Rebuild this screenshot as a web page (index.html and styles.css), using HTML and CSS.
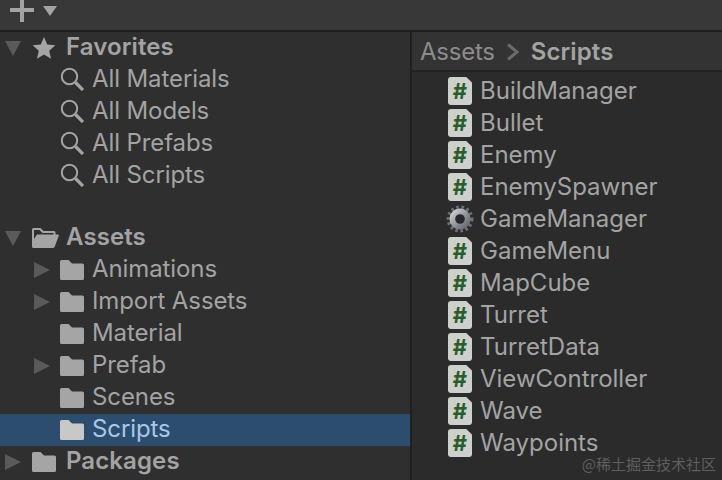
FILE: index.html
```html
<!DOCTYPE html>
<html lang="en">
<head>
<meta charset="utf-8">
<title>Project</title>
<link rel="stylesheet" href="styles.css">
</head>
<body>
<svg class="defs" width="0" height="0" aria-hidden="true">
  <symbol id="folder" viewBox="0 0 24 20"><path d="M1.5 0H8.5L12 3.5H22.5A1.5 1.5 0 0 1 24 5V18.5A1.5 1.5 0 0 1 22.5 20H1.5A1.5 1.5 0 0 1 0 18.5V1.5A1.5 1.5 0 0 1 1.5 0Z" fill="currentColor"/></symbol>
  <symbol id="lens" viewBox="0 0 24 24"><circle cx="9.5" cy="9.5" r="7.7" fill="none" stroke="currentColor" stroke-width="2"/><path d="M15.5 15.5L23 23" fill="none" stroke="currentColor" stroke-width="3.2"/></symbol>
  <symbol id="tri-down" viewBox="0 0 16 16"><path d="M0 1H16L8 16Z" fill="currentColor"/></symbol>
  <symbol id="tri-right" viewBox="0 0 16 16"><path d="M0 0L16 8L0 16Z" fill="currentColor"/></symbol>
</svg>
<div class="toolbar">
  <svg class="plus" width="24" height="24" viewBox="0 0 24 24"><path d="M10 0H14V10H24V14H14V24H10V14H0V10H10Z" fill="currentColor"/></svg>
  <svg class="caret" width="14" height="10" viewBox="0 0 14 10"><path d="M0 0H14L7 10Z" fill="currentColor"/></svg>
</div>
<div class="panes">
  <aside class="tree">
    <div class="row depth0">
      <svg class="tw"><use href="#tri-down"/></svg>
      <svg class="ico" width="24" height="24" viewBox="0 0 24 24"><path d="M12 1L15.2 8.6L23.4 9.3L17.2 14.7L19 22.8L12 18.5L5 22.8L6.8 14.7L.6 9.3L8.8 8.6Z" fill="currentColor"/></svg>
      <span class="head">Favorites</span>
    </div>
    <div class="row depth1"><svg class="ico lens"><use href="#lens"/></svg><span>All Materials</span></div>
    <div class="row depth1"><svg class="ico lens"><use href="#lens"/></svg><span>All Models</span></div>
    <div class="row depth1"><svg class="ico lens"><use href="#lens"/></svg><span>All Prefabs</span></div>
    <div class="row depth1"><svg class="ico lens"><use href="#lens"/></svg><span>All Scripts</span></div>
    <div class="spacer"></div>
    <div class="row depth0">
      <svg class="tw"><use href="#tri-down"/></svg>
      <svg class="ico open" width="27" height="20" viewBox="0 0 27 20"><path d="M1.5 0H8.5L11.5 3H22A1.5 1.5 0 0 1 23.5 4.5V6.5H21.5V5H10.5L7.5 2H2V11L5 6.5H25.5C26.5 6.5 27 7.2 26.6 8.2L22.8 18.6C22.5 19.5 22 20 21 20H1.5A1.5 1.5 0 0 1 0 18.5V1.5A1.5 1.5 0 0 1 1.5 0Z" fill="currentColor"/></svg>
      <span class="head">Assets</span>
    </div>
    <div class="row depth1"><svg class="tw"><use href="#tri-right"/></svg><svg class="ico folder"><use href="#folder"/></svg><span>Animations</span></div>
    <div class="row depth1"><svg class="tw"><use href="#tri-right"/></svg><svg class="ico folder"><use href="#folder"/></svg><span>Import Assets</span></div>
    <div class="row depth1"><svg class="ico folder"><use href="#folder"/></svg><span>Material</span></div>
    <div class="row depth1"><svg class="tw"><use href="#tri-right"/></svg><svg class="ico folder"><use href="#folder"/></svg><span>Prefab</span></div>
    <div class="row depth1"><svg class="ico folder"><use href="#folder"/></svg><span>Scenes</span></div>
    <div class="row depth1 selected"><svg class="ico folder"><use href="#folder"/></svg><span>Scripts</span></div>
    <div class="row depth0">
      <svg class="tw"><use href="#tri-right"/></svg>
      <svg class="ico folder"><use href="#folder"/></svg>
      <span class="head">Packages</span>
    </div>
  </aside>
  <main class="files">
    <div class="crumbs">
      <span class="crumb">Assets</span>
      <svg width="14" height="18" viewBox="0 0 14 18"><path d="M2 1.5L11 9L2 16.5" fill="none" stroke="currentColor" stroke-width="3"/></svg>
      <span class="head">Scripts</span>
    </div>
    <div class="list">
      <div class="file"><span class="script">#</span><span>BuildManager</span></div>
      <div class="file"><span class="script">#</span><span>Bullet</span></div>
      <div class="file"><span class="script">#</span><span>Enemy</span></div>
      <div class="file"><span class="script">#</span><span>EnemySpawner</span></div>
      <div class="file">
        <svg class="gear" width="28" height="28" viewBox="0 0 28 28">
          <defs><linearGradient id="steel" x1="0" y1="0" x2="1" y2="1"><stop offset="0" stop-color="#dfe1e4"/><stop offset=".55" stop-color="#8d9096"/><stop offset="1" stop-color="#55585d"/></linearGradient></defs>
          <circle cx="14" cy="14" r="11" fill="none" stroke="#6e7075" stroke-width="5" stroke-dasharray="2.4 2.4"/>
          <circle cx="14" cy="14" r="10.5" fill="url(#steel)"/>
          <circle cx="14" cy="14" r="4.8" fill="#26282b"/>
        </svg>
        <span>GameManager</span>
      </div>
      <div class="file"><span class="script">#</span><span>GameMenu</span></div>
      <div class="file"><span class="script">#</span><span>MapCube</span></div>
      <div class="file"><span class="script">#</span><span>Turret</span></div>
      <div class="file"><span class="script">#</span><span>TurretData</span></div>
      <div class="file"><span class="script">#</span><span>ViewController</span></div>
      <div class="file"><span class="script">#</span><span>Wave</span></div>
      <div class="file"><span class="script">#</span><span>Waypoints</span></div>
    </div>
  </main>
</div>
<div class="watermark">@稀土掘金技术社区</div>
</body>
</html>
```

FILE: styles.css
```css
* { box-sizing: border-box; }
html, body { margin: 0; padding: 0; }
body {
  width: 722px;
  height: 480px;
  overflow: hidden;
  position: relative;
  background: #2b2b2b;
  color: #a3a3a3;
  font-family: Inter, "Liberation Sans", sans-serif;
  font-size: 24px;
  line-height: 32px;
}
.defs { position: absolute; }
.toolbar {
  height: 32px;
  display: flex;
  align-items: flex-start;
  background: #383838;
  border-bottom: 2px solid #1f1f1f;
  padding: 0 0 0 10px;
  color: #a3a3a3;
  overflow: hidden;
}
.plus { margin-top: -2px; }
.caret { margin: 6px 0 0 9px; }
.panes { display: flex; height: 448px; }
.tree {
  width: 412px;
  flex: none;
  background: #2f2f2f;
  border-right: 2px solid #1f1f1f;
  overflow: hidden;
}
.row {
  height: 32px;
  position: relative;
  display: flex;
  align-items: center;
  letter-spacing: -0.1px;
}
.row > span { padding-bottom: 2px; }
.depth0 { padding-left: 32px; }
.depth1 { padding-left: 60px; }
.spacer { height: 30px; }
.row > .tw {
  position: absolute;
  width: 16px;
  height: 16px;
  color: #5a5a5a;
}
.depth0 > .tw { left: 5px; top: 8px; }
.depth1 > .tw { left: 34px; top: 8px; }
.ico { flex: none; margin-right: 8px; color: #a5a5a5; }
.ico.lens { width: 24px; height: 24px; margin-bottom: 2px; }
.ico.folder { width: 24px; height: 20px; }
.depth0 .ico { margin-right: 10px; }
.depth0 .ico.open { margin-right: 7px; }
.head { font-weight: 600; letter-spacing: 0.1px; color: #a3a3a3; }
.selected { background: #2c4d6e; color: #a5c9e8; }
.selected .ico { color: #c8c8c8; }
.files { flex: 1; min-width: 0; }
.crumbs {
  height: 40px;
  display: flex;
  align-items: center;
  gap: 11px;
  padding: 1px 0 0 8px;
  background: #333333;
  border-bottom: 2px solid #222222;
  color: #8c8c8c;
}
.crumb { letter-spacing: -0.25px; }
.crumbs svg { color: #6c6c6c; }
.crumbs .head { color: #a3a3a3; }
.list { padding-top: 3px; }
.file {
  height: 32px;
  display: flex;
  align-items: center;
  padding-left: 36px;
  gap: 8px;
}
.script {
  width: 24px;
  height: 28px;
  flex: none;
  background: #cdd1cc;
  border-radius: 3px;
  clip-path: polygon(0 0, 76% 0, 100% 20%, 100% 100%, 0 100%);
  color: #2c5c2c;
  font-size: 22px;
  font-weight: 700;
  line-height: 28px;
  text-align: center;
}
.gear { flex: none; margin: 0 -2px; }
.watermark {
  position: absolute;
  right: 6px;
  bottom: 6px;
  font-family: "Noto Sans CJK SC", sans-serif;
  font-size: 15px;
  line-height: 20px;
  color: #5e5e5e;
}
```
